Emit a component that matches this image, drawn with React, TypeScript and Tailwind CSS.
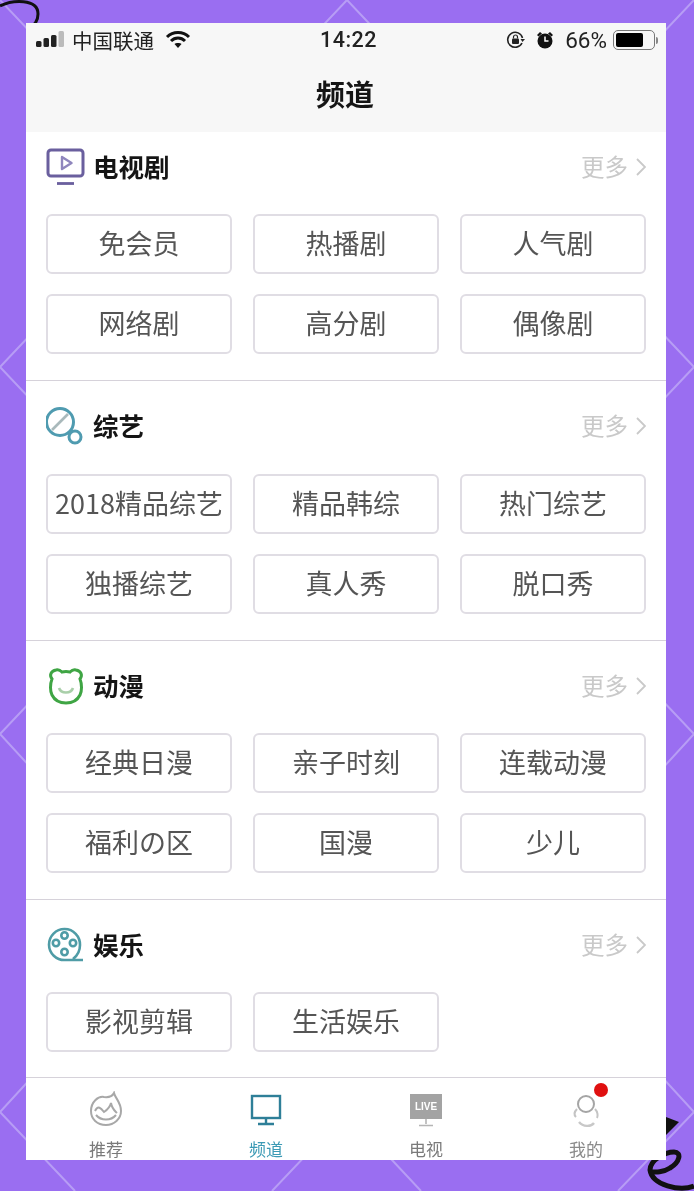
import React from 'react';

const SECTIONS = [
  { id: 'tv', title: '电视剧', head: 'h-[82px] pt-[16px]', foot: 'pb-[26px]', items: ['免会员', '热播剧', '人气剧', '网络剧', '高分剧', '偶像剧'] },
  { id: 'variety', title: '综艺', head: 'h-[93px] pt-[26px]', foot: 'pb-[26px]', items: ['2018精品综艺', '精品韩综', '热门综艺', '独播综艺', '真人秀', '脱口秀'] },
  { id: 'anime', title: '动漫', head: 'h-[92px] pt-[26px]', foot: 'pb-[26px]', items: ['经典日漫', '亲子时刻', '连载动漫', '福利の区', '国漫', '少儿'] },
  { id: 'fun', title: '娱乐', head: 'h-[92px] pt-[26px]', foot: 'pb-[25px]', items: ['影视剪辑', '生活娱乐'] },
];

const TvIcon = () => (
  <svg width="40" height="38" viewBox="0 0 40 38" fill="none" stroke="#6a5f9e">
    <rect x="2" y="2" width="35" height="26" rx="3" strokeWidth="3" />
    <path d="M16 9 L25.5 15 L16 21 Z" strokeWidth="2.4" strokeLinejoin="round" stroke="#8f86bd" />
    <path d="M11 35.5 H28" strokeWidth="2.8" />
  </svg>
);

const VarietyIcon = () => (
  <svg width="40" height="40" viewBox="2 0 40 40" fill="none" stroke="#4f9bb0">
    <circle cx="16" cy="16" r="13.5" strokeWidth="3" />
    <path d="M8 24 L24 8" strokeWidth="2.6" stroke="#a9b9bb" />
    <circle cx="31" cy="31" r="6" strokeWidth="3" />
  </svg>
);

const BearIcon = () => (
  <svg width="38" height="38" viewBox="0 0 38 38" fill="none" stroke="#3fa544">
    <path
      d="M9 3 C12 2 14 4 15 5 C17 4.6 21 4.6 23 5 C24 4 26 2 29 3 C34 4 36 8 33 12 C35 17 35 24 33 28 C30 34 25 36 19 36 C13 36 8 34 5 28 C3 24 3 17 5 12 C2 8 4 4 9 3 Z"
      strokeWidth="3"
    />
    <path d="M12 21 C14 27 24 27 26 21" strokeWidth="2.6" stroke="#a9cfa9" />
  </svg>
);

const ReelIcon = () => (
  <svg width="38" height="38" viewBox="0 0 38 38" fill="none" stroke="#4f9ca6" strokeWidth="2.6">
    <path d="M36 34 H18 A15.5 15.5 0 1 1 33 19 C33 25 30 30 26 33" />
    <circle cx="17.5" cy="9.5" r="3.2" />
    <circle cx="9" cy="17" r="3.2" />
    <circle cx="26" cy="17" r="3.2" />
    <circle cx="17.5" cy="26" r="3.2" />
  </svg>
);

const ICONS: Record<string, React.ReactNode> = {
  tv: <TvIcon />,
  variety: <VarietyIcon />,
  anime: <BearIcon />,
  fun: <ReelIcon />,
};

const StatusBar = () => (
  <div className="relative flex h-[34px] items-center justify-between pl-[10px] pr-[8px] text-[#222]">
    <div className="flex items-center">
      <svg width="30" height="20" viewBox="0 0 30 20" fill="#222">
        <rect x="0" y="11" width="5.5" height="6" rx="1.5" />
        <rect x="7.5" y="8" width="5.5" height="9" rx="1.5" />
        <rect x="15" y="5" width="5.5" height="12" rx="1.5" />
        <rect x="22.5" y="1" width="5.5" height="16" rx="1.5" fill="#bbb" />
      </svg>
      <span className="ml-[6px] text-[20.5px] leading-none">中国联通</span>
      <svg className="ml-[11px]" width="26" height="20" viewBox="0 0 26 20" fill="none" stroke="#111" strokeWidth="3">
        <path d="M2 7 C8 1 18 1 24 7" />
        <path d="M6 11 C10 7 16 7 20 11" />
        <path d="M13 18 L9.5 14 C11 12.6 15 12.6 16.5 14 Z" fill="#111" stroke="none" />
      </svg>
    </div>
    <span className="absolute left-[294px] font-['Roboto',sans-serif] text-[21.5px] font-medium tracking-[0.5px]">14:22</span>
    <div className="flex items-center">
      <svg width="20" height="20" viewBox="0 0 20 20" fill="none" stroke="#222" strokeWidth="1.6">
        <path d="M16 13 A7.5 7.5 0 1 1 16.5 8" />
        <path d="M14.5 9 L19 9 L16.5 12 Z" fill="#222" stroke="none" />
        <rect x="6" y="8.5" width="7" height="5.5" rx="1" fill="#222" stroke="none" />
        <path d="M7.5 8.5 V7 A2 2 0 0 1 11.5 7 V8.5" strokeWidth="1.2" />
      </svg>
      <svg className="ml-[10px]" width="18" height="20" viewBox="0 0 18 20" fill="#111">
        <circle cx="9" cy="11" r="7.5" />
        <path d="M1 5 L4 2 L6 3.5 L2.5 6.5 Z M17 5 L14 2 L12 3.5 L15.5 6.5 Z" />
        <path d="M9 6.5 V11 H12.5" stroke="#fff" strokeWidth="1.5" fill="none" />
      </svg>
      <span className="ml-[11px] font-['Roboto',sans-serif] text-[22.5px] leading-none">66%</span>
      <div className="ml-[6px] flex h-[20px] w-[42px] items-center rounded-[5px] border border-[#777] p-[2px]">
        <div className="h-full w-[27px] rounded-[2px] bg-black" />
      </div>
      <div className="ml-[1px] h-[7px] w-[2px] rounded-r-sm bg-[#888]" />
    </div>
  </div>
);

const SectionBlock = ({ id, title, items, head, foot }: { id: string; title: string; items: string[]; head: string; foot: string }) => (
  <section className={`border-b border-[#d6d2da] px-[20px] ${foot}`}>
    <div className={`flex items-start justify-between ${head}`}>
      <div className="flex h-[38px] items-center gap-[7px]">
        <div className="flex w-[40px] items-center justify-center">{ICONS[id]}</div>
        <span className="pb-[3px] text-[25.5px] font-bold leading-none text-[#151515]">{title}</span>
      </div>
      <div className="flex h-[38px] items-center text-[#c9c9c9]">
        <span className="text-[23.5px] leading-none">更多</span>
        <svg className="ml-[8px]" width="10" height="20" viewBox="0 0 10 20" fill="none" stroke="#c9c9c9" strokeWidth="1.8">
          <path d="M1 2 L9 10 L1 18" />
        </svg>
      </div>
    </div>
    <div className="grid grid-cols-3 gap-x-[21px] gap-y-[20px]">
      {items.map(item => (
        <div
          key={item}
          className="flex h-[60px] items-center justify-center whitespace-nowrap rounded-[6px] border-2 border-[#e0dde4] pb-[3px] text-[27px] leading-none text-[#555]"
        >
          {item}
        </div>
      ))}
    </div>
  </section>
);

const TabBar = () => (
  <nav className="grid h-[82px] grid-cols-4 bg-white">
    <div className="flex flex-col items-center pt-[13px]">
      <svg width="34" height="36" viewBox="0 0 34 36" fill="none" stroke="#a8a8a8" strokeWidth="2">
        <path d="M25 2 C26 7 32 11 32 20 C32 28 25 34 17 34 C8 34 2 28 2 20 C2 11 9 5 15 6 C19 6.5 23 6 25 2 Z" />
        <path d="M6 20 C9 14 12 17 15 21 C18 19 21 16 22 12 C23 18 26 20 28 22" />
        <path d="M7 24 C12 30 22 30 27 24" />
      </svg>
      <span className="mt-[13px] text-[17px] leading-none text-[#7a7a7a]">推荐</span>
    </div>
    <div className="flex flex-col items-center pt-[16px]">
      <svg width="32" height="33" viewBox="0 0 32 33" fill="none" stroke="#2e7f98" strokeWidth="2.4">
        <rect x="2" y="2" width="28" height="22" />
        <path d="M16 24 V29 M8 30 H24" />
      </svg>
      <span className="mt-[13px] text-[17px] leading-none text-[#3c9ab5]">频道</span>
    </div>
    <div className="flex flex-col items-center pt-[16px]">
      <div className="flex h-[25px] w-[32px] items-center justify-center bg-[#a3a3a3] font-['Liberation_Sans',sans-serif] text-[10px] font-bold leading-none text-white">
        LIVE
      </div>
      <svg width="18" height="8" viewBox="0 0 18 8" fill="none" stroke="#b5b5b5" strokeWidth="1.6">
        <path d="M9 0 V5 M2 6.5 H16" />
      </svg>
      <span className="mt-[13px] text-[17px] leading-none text-[#7a7a7a]">电视</span>
    </div>
    <div className="relative flex flex-col items-center pt-[16px]">
      <svg width="30" height="38" viewBox="0 0 30 38" fill="none" stroke="#a5a5a5" strokeWidth="2">
        <circle cx="15" cy="10" r="8" />
        <path d="M6 15 C3 18 3 21 5 23 M24 15 C27 18 27 22 26 24" stroke="#c4c4c4" />
        <path d="M8 28 C12 33 20 33 23 29" stroke="#c8c8c8" strokeWidth="2.4" />
      </svg>
      <span className="mt-[8px] text-[17px] leading-none text-[#8a8a8a] blur-[0.7px]">我的</span>
      <span className="absolute left-[88px] top-[5px] h-[14px] w-[14px] rounded-full bg-[#e01010]" />
    </div>
  </nav>
);

export default function App() {
  return (
    <div className="relative h-[1191px] w-[694px] overflow-hidden bg-[#9a6ef1] pl-[26px] pt-[23px] font-['Noto_Sans_CJK_SC','Liberation_Sans',sans-serif]">
      {/* background pattern and doodles */}
      <svg className="absolute left-0 top-0" width="694" height="1191" viewBox="0 0 694 1191" fill="none">
        <g stroke="#b79df5" strokeWidth="2">
          <path d="M347 0 L0 367 L347 734 L0 1112 L75 1191" />
          <path d="M347 0 L694 367 L347 734 L694 1112 L618 1191" />
          <path d="M0 0 L347 367 L0 734 L347 1112 L272 1191" />
          <path d="M694 0 L347 367 L694 734 L347 1112 L421 1191" />
        </g>
        <path d="M0 6 C12 0 38 -2 38 14 C38 22 34 26 28 28" stroke="#111" strokeWidth="3" />
        <path d="M666 1117 L679 1122 L666 1135 Z" fill="#111" />
        <path d="M694 1186 C680 1192 652 1185 650 1170 C650 1160 665 1152 674 1152 C682 1152 680 1162 670 1168 C664 1172 655 1173 650 1171" stroke="#111" strokeWidth="5" />
      </svg>

      <div className="relative h-[1137px] w-[640px] overflow-hidden bg-white blur-[0.3px]">
        <header className="h-[109px] bg-[#f7f7f7]">
          <StatusBar />
          <h1 className="pt-[22px] pr-[2px] text-center text-[29px] font-bold leading-none text-[#151515]">频道</h1>
        </header>
        {SECTIONS.map(s => (
          <SectionBlock key={s.id} id={s.id} title={s.title} items={s.items} head={s.head} foot={s.foot} />
        ))}
        <TabBar />
      </div>
    </div>
  );
}
